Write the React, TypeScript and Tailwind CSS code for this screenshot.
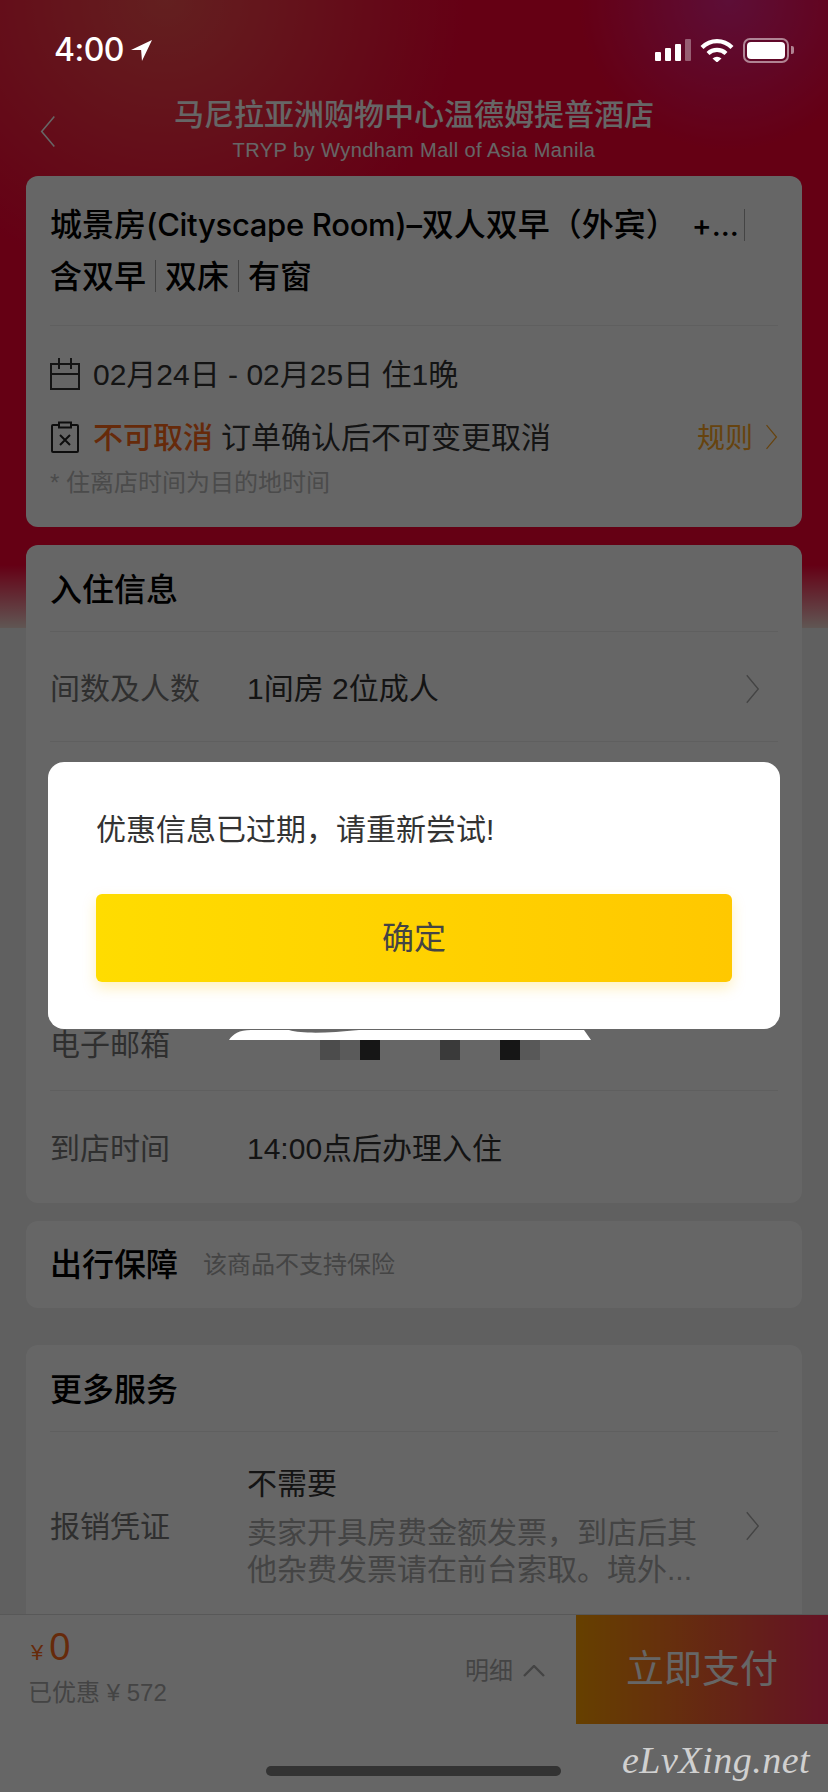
import React from 'react';

const FONT = "font-['Liberation_Sans','Noto_Sans_CJK_SC',sans-serif]";

const Chevron = ({ className }: { className: string }) => (
  <svg viewBox="0 0 16 34" fill="none" stroke="currentColor" strokeWidth="1.6" className={className}>
    <path d="M1.5 1.5 14.5 17 1.5 32.5" />
  </svg>
);

const Sep = () => <span className="mx-[9px] inline-block h-[32px] w-px bg-[#aaa] align-[-4px]" />;

const Row = ({ label, children, chevron, className }: { label: string; children?: React.ReactNode; chevron?: boolean; className: string }) => (
  <div className={`flex items-center border-b border-[#eee] last:border-b-0 ${className}`}>
    <div className="w-[197px] shrink-0 text-[30px] leading-[40px] text-[#777]">{label}</div>
    <div className="min-w-0 flex-1 text-[30px] leading-[40px] text-[#333]">{children}</div>
    {chevron && <Chevron className="mr-[18px] h-[30px] w-[15px] text-[#aaa]" />}
  </div>
);

const StatusBar = () => (
  <div className="absolute left-0 top-0 flex h-[100px] w-full items-center justify-between pl-[54px] pr-[34px] text-white">
    <div className="flex items-center gap-[7px]">
      <span className="font-['Inter',sans-serif] text-[32px] font-medium leading-none tracking-[-0.5px]">4:00</span>
      <svg viewBox="0 0 22 22" className="h-[21px] w-[21px]" fill="currentColor">
        <path d="M22 0 0 10.5h10.6L11.5 22z" />
      </svg>
    </div>
    <div className="flex items-center">
      <div className="flex items-end gap-[4px]">
        <div className="h-[9px] w-[6px] rounded-[1px] bg-white" />
        <div className="h-[13px] w-[6px] rounded-[1px] bg-white" />
        <div className="h-[17px] w-[6px] rounded-[1px] bg-white" />
        <div className="h-[22px] w-[6px] rounded-[1px] bg-white/35" />
      </div>
      <svg viewBox="0 0 34 24" className="ml-[9px] h-[24px] w-[34px]" fill="none" stroke="currentColor" strokeWidth="4.2">
        <path d="M2 9.5C10.500 1 23.500 1 32 9.500" />
        <path d="M8 15.500c5-4.800 13-4.800 18 0" />
        <path d="M12.500 20.500 17 24.500l4.500-4a7 7 0 0 0-9 0z" fill="currentColor" stroke="none" />
      </svg>
      <div className="ml-[9px] flex items-center">
        <div className="h-[25px] w-[46px] rounded-[7px] border-2 border-white/50 p-[2px]">
          <div className="h-full w-full rounded-[4px] bg-white" />
        </div>
        <div className="ml-[2px] h-[8px] w-[3px] rounded-r-[2px] bg-white/50" />
      </div>
    </div>
  </div>
);

const App: React.FC = () => {
  return (
    <div className={`relative h-[1792px] w-[828px] overflow-hidden bg-[#f0f0f0] ${FONT}`}>
      {/* red header behind the cards */}
      <div className="absolute left-0 top-0 h-[628px] w-full bg-[radial-gradient(circle_at_88%_0%,#e8248a_0,rgba(232,36,138,0)_150px),radial-gradient(ellipse_at_20%_0%,#f85050_0,rgba(248,80,80,0)_300px),linear-gradient(180deg,#fc0034_0,#fc0034_565px,#f0d8d0_628px)]" />

      <div className="relative">
        {/* nav */}
        <div className="relative h-[176px] text-white">
          <div className="flex flex-col items-center pt-[97px]">
            <div className="text-[30px] font-medium leading-[36px]">马尼拉亚洲购物中心温德姆提普酒店</div>
            <div className="mt-[4px] text-[20px] leading-[26px] tracking-[0.45px]">TRYP by Wyndham Mall of Asia Manila</div>
          </div>
          <Chevron className="absolute left-[38px] top-[115px] h-[33px] w-[20px] rotate-180" />
        </div>

        <div className="flex flex-col px-[26px]">
          {/* room card */}
          <div className="h-[351px] rounded-[12px] bg-white px-[24px]">
            <div className="border-b border-[#eee] pb-[22px] pt-[23px] text-[32px] font-medium leading-[52px] text-black">
              <div className="flex items-center whitespace-nowrap">
                城景房<span className="font-['Inter',sans-serif] text-[31px] tracking-[-0.3px]">(Cityscape Room)–</span>双人双早（外宾）
                <span className="ml-[14px] font-['Inter',sans-serif] text-[30px]">+...</span>
                <span className="ml-[5px] h-[32px] w-px bg-[#aaa]" />
              </div>
              <div>
                含双早<Sep />双床<Sep />有窗
              </div>
            </div>
            <div className="mt-[26px] flex h-[44px] items-center text-[30px] text-[#333]">
              <svg viewBox="0 0 30 32" fill="none" stroke="currentColor" strokeWidth="2" className="h-[32px] w-[30px]">
                <path d="M1 6h28v25H1zM1 16h28M9 0v11M21 0v11" />
              </svg>
              <span className="ml-[13px]">02月24日 - 02月25日 住1晚</span>
            </div>
            <div className="mt-[19px] flex h-[44px] items-center text-[30px]">
              <svg viewBox="0 0 28 32" fill="none" stroke="currentColor" strokeWidth="2" className="ml-[1px] h-[32px] w-[28px] text-[#222]">
                <path d="M8 4H2a1 1 0 0 0-1 1v25a1 1 0 0 0 1 1h24a1 1 0 0 0 1-1V5a1 1 0 0 0-1-1h-6M8 1.500h12v5H8zM9 14l10 10M19 14 9 24" />
              </svg>
              <span className="ml-[14px] font-medium text-[#ff6a1a]">不可取消</span>
              <span className="ml-[8px] text-[#333]">订单确认后不可变更取消</span>
              <span className="ml-auto pt-[3px] text-[28px] text-[#ffa826]">规则</span>
              <Chevron className="ml-[12px] h-[26px] w-[13px] text-[#ffa826]" />
            </div>
            <div className="mt-[8px] text-[24px] leading-[32px] text-[#bbb]">* 住离店时间为目的地时间</div>
          </div>

          {/* guest card */}
          <div className="mt-[18px] h-[658px] rounded-[12px] bg-white px-[24px]">
            <div className="flex h-[87px] items-center border-b border-[#eee] pt-[3px] text-[32px] font-medium text-black">入住信息</div>
            <Row label="间数及人数" chevron className="h-[110px] pt-[4px]">1间房 2位成人</Row>
            <div className="h-[240px]" />
            <Row label="电子邮箱" className="h-[109px] pt-[17px]" />
            <Row label="到店时间" className="h-[112px] pt-[4px]">14:00点后办理入住</Row>
          </div>

          {/* insurance */}
          <div className="mt-[18px] flex h-[87px] items-center rounded-[12px] bg-white px-[24px]">
            <span className="text-[32px] font-medium text-black">出行保障</span>
            <span className="ml-[25px] text-[24px] text-[#aaa]">该商品不支持保险</span>
          </div>

          {/* more services */}
          <div className="mt-[37px] h-[300px] rounded-[12px] bg-white px-[24px]">
            <div className="flex h-[87px] items-center border-b border-[#eee] pt-[3px] text-[32px] font-medium text-black">更多服务</div>
            <div className="flex items-center pt-[32px]">
              <div className="w-[197px] shrink-0 text-[30px] text-[#777]">报销凭证</div>
              <div className="min-w-0 flex-1">
                <div className="text-[30px] leading-[40px] text-[#333]">不需要</div>
                <div className="mt-[10px] w-[452px] text-[30px] leading-[37px] text-[#aaa]">
                  卖家开具房费金额发票，到店后其他杂费发票请在前台索取。境外...
                </div>
              </div>
              <Chevron className="mr-[18px] h-[30px] w-[15px] text-[#aaa]" />
            </div>
          </div>
        </div>
      </div>

      {/* bottom bar */}
      <div className="absolute bottom-0 left-0 h-[178px] w-full border-t border-[#ddd] bg-white">
        <div className="flex h-[109px] items-stretch">
          <div className="flex-1 pl-[28px] pt-[10px]">
            <div className="flex items-baseline leading-[44px] text-[#ff6a1a]">
              <span className="ml-[3px] text-[22px]">¥</span>
              <span className="ml-[6px] text-[38px]">0</span>
            </div>
            <div className="mt-[3px] text-[24px] leading-[30px] text-[#aaa]">已优惠 ¥ 572</div>
          </div>
          <div className="mr-[31px] flex items-center gap-[10px] pt-[2px] text-[24px] text-[#aaa]">
            明细
            <svg viewBox="0 0 22 12" fill="none" stroke="currentColor" strokeWidth="2.400" className="h-[12px] w-[22px]">
              <path d="M1 11 11 1l10 10" />
            </svg>
          </div>
          <div className="flex w-[252px] items-center justify-center bg-[linear-gradient(90deg,#ffa000,#fc2d5c)] text-[38px] text-white">
            立即支付
          </div>
        </div>
      </div>

      {/* mask */}
      <div className="absolute inset-0 bg-black/60" />

      <StatusBar />

      {/* redaction over the email row */}
      <svg viewBox="0 0 362 10" className="absolute left-[229px] top-[1030px] h-[10px] w-[362px]">
        <path d="M0 10C4 4 10 0 22 0h38c14 4 40 3 70-0h225l7 10z" fill="#fff" />
      </svg>
      <div className="absolute left-[320px] top-[1040px] flex h-[20px]">
        <div className="w-[20px] bg-[#4c4c4c]" />
        <div className="w-[20px] bg-[#5a5a5a]" />
        <div className="w-[20px] bg-[#161616]" />
        <div className="ml-[60px] w-[20px] bg-[#3a3a3a]" />
        <div className="ml-[40px] w-[20px] bg-[#161616]" />
        <div className="w-[20px] bg-[#585858]" />
      </div>

      {/* dialog */}
      <div className="absolute left-[48px] top-[762px] h-[267px] w-[732px] rounded-[16px] bg-white px-[48px]">
        <div className="pt-[48px] text-[30px] leading-[40px] text-[#333]">优惠信息已过期，请重新尝试!</div>
        <div className="mt-[44px] flex h-[88px] items-center justify-center rounded-[6px] bg-[linear-gradient(90deg,#ffdc00,#ffc800)] text-[32px] text-[#444] shadow-[0_6px_14px_rgba(255,200,0,0.25)]">
          确定
        </div>
      </div>

      {/* home indicator */}
      <div className="absolute left-[266px] top-[1766px] h-[10px] w-[295px] rounded-full bg-[#333]" />

      {/* watermark */}
      <div className="absolute left-[622px] top-[1738px] font-['Liberation_Serif',serif] text-[38px] italic leading-[44px] tracking-[0.5px] text-[#d0d0d0]">
        eLvXing.net
      </div>
    </div>
  );
};

export default App;
